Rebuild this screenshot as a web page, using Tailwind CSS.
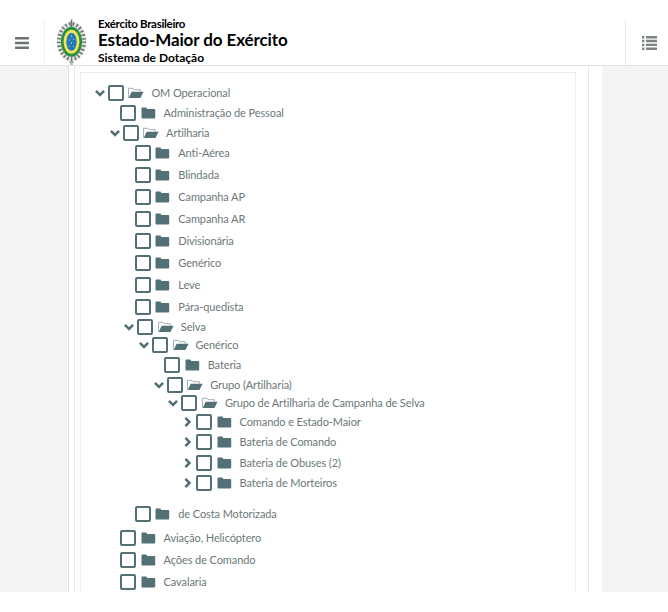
<!DOCTYPE html>
<html lang="pt-BR">
<head>
    <meta charset="UTF-8">
    <meta name="viewport" content="width=device-width, initial-scale=1.0">
    <title>Sistema de Dotação</title>
    <script src="https://cdn.jsdelivr.net/npm/@tailwindcss/browser@4"></script>
</head>
<body class="bg-white font-['Lato',sans-serif] w-[668px] h-[612px] overflow-hidden">

    <!-- header -->
    <header class="relative z-10 h-[66px] pt-5 flex border-b border-[#e3e3e3] bg-white">
        <button class="w-[45px] h-full flex items-center justify-center border-r border-[#f0f0f0]">
            <svg class="w-[14px] h-[14px] -ml-px" viewBox="0 0 14 14" fill="#6b7374">
                <rect y="1" width="14" height="2.4" rx=".4"/>
                <rect y="5.8" width="14" height="2.4" rx=".4"/>
                <rect y="10.6" width="14" height="2.4" rx=".4"/>
            </svg>
        </button>

        <svg class="w-[32px] h-[47px] ml-[11px] -mt-[1px] shrink-0" viewBox="0 0 32 47">
            <path d="M15.5 36V46" stroke="#bfc3bf" stroke-width="3"/>
            <path d="M12 40L19 40M13 43L18 43" stroke="#8b908b" stroke-width="1"/>
            <ellipse cx="15.5" cy="22.5" rx="12.6" ry="17.5" fill="none" stroke="#e4e6e4" stroke-width="4"/>
            <ellipse cx="15.5" cy="22.5" rx="12.6" ry="17.5" fill="none" stroke="#6d736f" stroke-width="4" stroke-dasharray="1.5 2.3"/>
            <path d="M15.5 .5V8" stroke="#6d736f" stroke-width="1.6"/>
            <ellipse cx="15.5" cy="22.8" rx="10.6" ry="15" fill="#2a8f42"/>
            <ellipse cx="15.5" cy="22.8" rx="8" ry="12" fill="#efe556"/>
            <ellipse cx="15.5" cy="22.8" rx="5.2" ry="9" fill="#2478b8"/>
            <g fill="#b9def0">
                <circle cx="15.5" cy="17" r=".7"/>
                <circle cx="13" cy="21" r=".6"/>
                <circle cx="17.8" cy="20.5" r=".6"/>
                <circle cx="15.5" cy="24" r=".7"/>
                <circle cx="13.6" cy="27" r=".5"/>
                <circle cx="17.4" cy="27.5" r=".5"/>
            </g>
        </svg>

        <div class="ml-[10px] -mt-[3px] text-black whitespace-nowrap">
            <p class="text-[11.5px] leading-[14px] font-bold tracking-[-0.3px]">Exército Brasileiro</p>
            <p class="text-[17px] leading-[18px] font-bold tracking-[-0.1px]">Estado-Maior do Exército</p>
            <p class="mt-[2px] text-[12px] leading-[14px] font-bold">Sistema de Dotação</p>
        </div>

        <button class="ml-auto w-[43px] h-full flex items-center justify-center border-l border-[#e8e8e8]">
            <svg class="w-[15px] h-[14px] ml-1 mt-px" viewBox="0 0 15 14" fill="#7c8384">
                <path d="M0 0h2.4v2.4H0zM4 0h11v2.4H4zM0 3.8h2.4v2.4H0zM4 3.8h11v2.4H4zM0 7.7h2.4v2.4H0zM4 7.7h11v2.4H4zM0 11.6h2.4V14H0zM4 11.6h11V14H4z"/>
            </svg>
        </button>
    </header>

    <!-- content -->
    <main class="h-[526px] flex bg-[#f4f4f3]">
        <div class="ml-[68px] w-[534px] h-full flex bg-white border-l border-[#dedede]">
            <div class="ml-[5px] w-[515px] h-full border-x border-[#e6e6e6] pt-[6px] pl-[5px]">
                <div id="tree" class="w-[496px] h-[520px] border border-b-0 border-[#ececec] pt-[12px] text-[#6b7878] text-[11px] tracking-[-0.1px]"></div>
            </div>
        </div>
    </main>

    <!-- icons used by the tree -->
    <svg class="hidden">
        <symbol id="down" viewBox="0 0 10 10"><path d="M.9 2.8L5 6.9L9.1 2.8" fill="none" stroke="#527075" stroke-width="2.5"/></symbol>
        <symbol id="right" viewBox="0 0 10 10"><path d="M2.4 .9L6.5 5L2.4 9.1" fill="none" stroke="#527075" stroke-width="2.5"/></symbol>
        <symbol id="folder" viewBox="0 0 16 12"><path d="M.5 1.5Q.5 .5 1.3 .5H5Q6 .5 6 1.5V2H13.2Q14.2 2 14.2 3V10.5Q14.2 11.5 13.2 11.5H1.3Q.5 11.5 .5 10.5Z" fill="#527075"/></symbol>
        <symbol id="open" viewBox="0 0 16 12">
            <path d="M.5 10.8V1.3H5L6 2.7H12.3V4.8" fill="none" stroke="#8ca0a3" stroke-width=".8"/>
            <path d="M3.6 4.7H15.6L12.4 11H.8Z" fill="#527075"/>
        </symbol>
    </svg>

    <script>
        // [level, state, label, y of the row's middle]
        const rows = [
            [0, 'down', 'OM Operacional', 93],
            [1, '', 'Administração de Pessoal', 113],
            [1, 'down', 'Artilharia', 133],
            [2, '', 'Anti-Aérea', 153],
            [2, '', 'Blindada', 175],
            [2, '', 'Campanha AP', 197],
            [2, '', 'Campanha AR', 219],
            [2, '', 'Divisionária', 241],
            [2, '', 'Genérico', 263],
            [2, '', 'Leve', 285],
            [2, '', 'Pára-quedista', 307],
            [2, 'down', 'Selva', 327],
            [3, 'down', 'Genérico', 345],
            [4, '', 'Bateria', 365],
            [4, 'down', 'Grupo (Artilharia)', 385],
            [5, 'down', 'Grupo de Artilharia de Campanha de Selva', 403],
            [6, 'right', 'Comando e Estado-Maior', 422],
            [6, 'right', 'Bateria de Comando', 442],
            [6, 'right', 'Bateria de Obuses (2)', 463],
            [6, 'right', 'Bateria de Morteiros', 483],
            [2, '', 'de Costa Motorizada', 514],
            [1, '', 'Aviação, Helicóptero', 538],
            [1, '', 'Ações de Comando', 560],
            [1, '', 'Cavalaria', 582],
        ];

        let bottom = 85;
        document.getElementById('tree').innerHTML = rows.map(([level, state, label, middle]) => {
            const gap = middle - 8 - bottom;
            bottom = middle + 8;
            const indent = 13.9 + level * 14.7 - (state ? 0 : 2.5);
            const folder = state === 'down' ? 'open' : 'folder';
            return `
                <div class="flex items-center h-4 whitespace-nowrap" style="margin-top:${gap}px;padding-left:${indent}px">
                    <svg class="w-[10px] h-[10px] shrink-0">${state ? `<use href="#${state}"/>` : ''}</svg>
                    <span class="ml-[3px] w-4 h-4 shrink-0 border-2 border-[#527075] rounded-[2px]"></span>
                    <svg class="ml-[4.5px] w-4 h-3 shrink-0"><use href="#${folder}"/></svg>
                    <span class="ml-[7px] leading-4">${label}</span>
                </div>`;
        }).join('');
    </script>
</body>
</html>
